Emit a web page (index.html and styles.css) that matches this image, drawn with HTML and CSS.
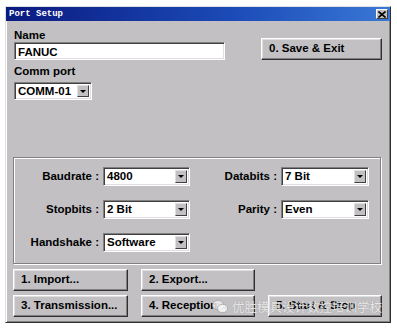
FILE: index.html
```html
<!DOCTYPE html>
<html lang="en">
<head>
    <meta charset="UTF-8">
    <title>Port Setup</title>
    <link rel="stylesheet" href="styles.css">
</head>
<body>

    <div class="window">
        <!-- Title Bar -->
        <div class="title-bar">
            <span class="title-text">Port Setup</span>
            <span class="close-btn">
                <svg width="8" height="7" viewBox="0 0 8 7"><path d="M0.5 0.5 L7.5 6.5 M7.5 0.5 L0.5 6.5" stroke="#000" stroke-width="1.6"/></svg>
            </span>
        </div>

        <div class="content">
            <!-- Name / Comm port -->
            <div class="top">
                <div class="top-left">
                    <div class="field-label">Name</div>
                    <div class="text-input">FANUC</div>
                    <div class="field-label comm-label">Comm port</div>
                    <div class="combo comm-combo">
                        <span class="combo-value">COMM-01</span>
                        <span class="combo-btn"><span class="arrow"></span></span>
                    </div>
                </div>
                <div class="btn save-btn">0. Save &amp; Exit</div>
            </div>

            <!-- Settings Group -->
            <div class="group">
                <div class="row-label">Baudrate :</div>
                <div class="combo"><span class="combo-value">4800</span><span class="combo-btn"><span class="arrow"></span></span></div>
                <div class="row-label">Databits :</div>
                <div class="combo"><span class="combo-value">7 Bit</span><span class="combo-btn"><span class="arrow"></span></span></div>

                <div class="row-label">Stopbits :</div>
                <div class="combo"><span class="combo-value">2 Bit</span><span class="combo-btn"><span class="arrow"></span></span></div>
                <div class="row-label">Parity :</div>
                <div class="combo"><span class="combo-value">Even</span><span class="combo-btn"><span class="arrow"></span></span></div>

                <div class="row-label">Handshake :</div>
                <div class="combo"><span class="combo-value">Software</span><span class="combo-btn"><span class="arrow"></span></span></div>
            </div>

            <!-- Action Buttons -->
            <div class="actions">
                <div class="btn">1. Import...</div>
                <div class="btn">2. Export...</div>
                <div></div>
                <div class="btn">3. Transmission...</div>
                <div class="btn">4. Reception...</div>
                <div class="btn">5. Start &amp; Stop</div>
            </div>
        </div>

        <!-- Watermark -->
        <div class="watermark">
            <svg width="16" height="15" viewBox="0 0 16 15">
                <ellipse cx="6" cy="6" rx="5.5" ry="4.8" fill="rgba(235,235,235,0.85)" stroke="rgba(150,150,150,0.8)" stroke-width="0.8"/>
                <ellipse cx="10.5" cy="9.5" rx="5" ry="4.2" fill="rgba(245,245,245,0.9)" stroke="rgba(150,150,150,0.8)" stroke-width="0.8"/>
            </svg>
            <span>优胜模具设计数控培训学校</span>
        </div>
    </div>

</body>
</html>
```

FILE: styles.css
```css
/* General Styles */
body {
    margin: 0;
    background: #ffffff;
    font-family: "Liberation Sans", Arial, sans-serif;
    font-size: 11.5px;
    color: #000;
}

/* Window */
.window {
    position: relative;
    margin: 6px 0 0 5px;
    width: 386px;
    height: 317px;
    box-sizing: border-box;
    background: #c2c0c3;
    border: 1px solid;
    border-color: #dfdfdf #303030 #303030 #dfdfdf;
    box-shadow: inset 1px 1px #ffffff, inset -1px -1px #808080;
}

.title-bar {
    height: 14px;
    display: flex;
    align-items: center;
    justify-content: space-between;
    padding: 0 2px 0 3px;
    background: linear-gradient(to right, #0a1a80, #1c4cb8 60%, #3a78d6);
}

.title-text {
    font-family: "Liberation Mono", monospace;
    font-weight: bold;
    font-size: 9px;
    color: #fff;
}

.close-btn {
    width: 12px;
    height: 10px;
    box-sizing: border-box;
    display: flex;
    align-items: center;
    justify-content: center;
    background: #c2c0c3;
    border: 1px solid;
    border-color: #fff #404040 #404040 #fff;
}

/* Content */
.content {
    padding: 8px 0 0 7px;
}

.top {
    display: flex;
}

.top-left {
    width: 211px;
    margin-left: 1px;
}

.field-label {
    height: 13px;
    line-height: 13px;
    font-weight: bold;
}

.comm-label {
    margin-top: 5px;
    margin-bottom: 4px;
}

.text-input {
    height: 18px;
    line-height: 14px;
    box-sizing: border-box;
    padding: 0 3px;
    background: #fff;
    border: 1px solid;
    border-color: #808080 #fff #fff #808080;
    box-shadow: inset 1px 1px #404040, inset -1px -1px #dfdfdf;
    padding-top: 2px;
    font-weight: bold;
}

/* Combo Boxes */
.combo {
    display: flex;
    height: 19px;
    box-sizing: border-box;
    padding: 2px;
    background: #fff;
    border: 1px solid;
    border-color: #808080 #fff #fff #808080;
    box-shadow: inset 1px 1px #404040, inset -1px -1px #dfdfdf;
}

.comm-combo {
    width: 78px;
    height: 18px;
}

.combo-value {
    flex: 1;
    padding-left: 1px;
    line-height: 13px;
    font-weight: bold;
}

.combo-btn {
    width: 12px;
    box-sizing: border-box;
    display: flex;
    align-items: center;
    justify-content: center;
    background: #c2c0c3;
    border: 1px solid;
    border-color: #dfdfdf #404040 #404040 #dfdfdf;
}

.arrow {
    width: 0;
    height: 0;
    border-left: 3px solid transparent;
    border-right: 3px solid transparent;
    border-top: 3px solid #000;
}

/* Buttons */
.btn {
    height: 22px;
    box-sizing: border-box;
    line-height: 18px;
    padding-left: 7px;
    font-weight: bold;
    background: #c2c0c3;
    border: 1px solid;
    border-color: #fff #303030 #303030 #fff;
    box-shadow: inset -1px -1px #808080, inset 1px 1px #dfdfdf;
    white-space: nowrap;
    overflow: hidden;
}

.save-btn {
    width: 121px;
    margin: 9px 0 0 36px;
}

/* Group Box */
.group {
    margin-top: 57px;
    width: 368px;
    height: 107px;
    box-sizing: border-box;
    border: 1px solid #808080;
    box-shadow: inset 1px 1px #fff, 1px 1px #fff;
    padding: 9px 0 0 1px;
    display: grid;
    grid-template-columns: 88px 87px 91px 88px;
    grid-auto-rows: 19px;
    row-gap: 14px;
}

.row-label {
    text-align: right;
    padding-right: 4px;
    line-height: 19px;
    font-weight: bold;
}

/* Action Buttons */
.actions {
    margin-top: 5px;
    display: grid;
    grid-template-columns: 115px 114px 114px;
    column-gap: 13px;
    row-gap: 4px;
}

/* Watermark */
.watermark {
    position: absolute;
    left: 206px;
    top: 290px;
    display: flex;
    align-items: center;
    gap: 4px;
    font-family: "Noto Sans CJK SC", sans-serif;
    font-size: 12.5px;
    color: rgba(255, 255, 255, 0.75);
    text-shadow: 0 0 1px rgba(120, 120, 120, 0.6);
}
```
